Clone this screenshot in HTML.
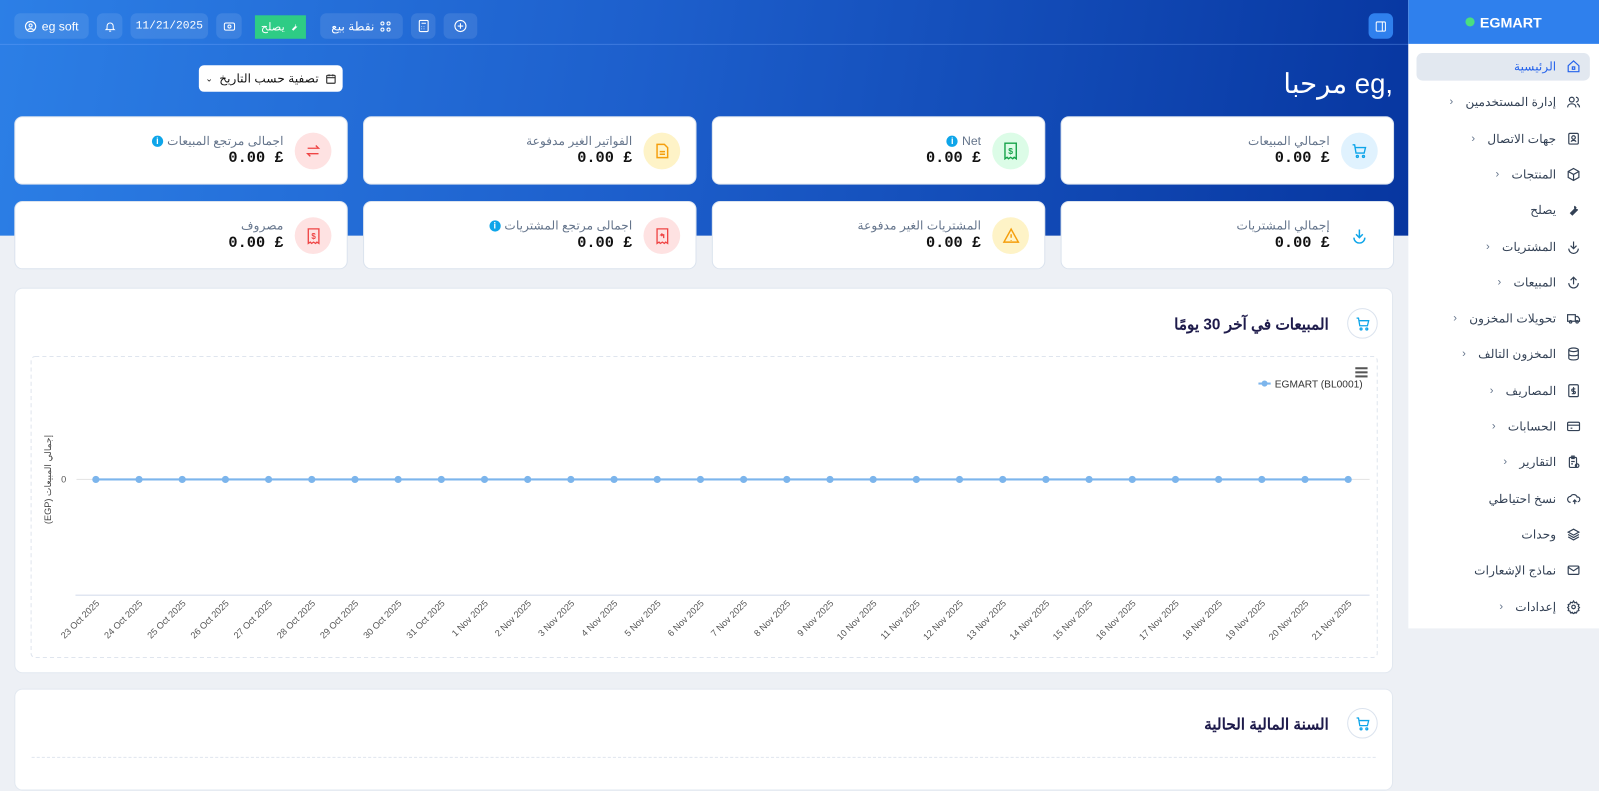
<!DOCTYPE html>
<html><head><meta charset="utf-8"><style>
*{box-sizing:border-box;margin:0;padding:0}
html,body{width:1599px;height:761px;overflow:hidden;background:#edf0f5}
#w{position:absolute;left:0;top:0;width:1568px;height:746px;transform:scale(1.0198,1.0201);transform-origin:0 0;font-family:"Liberation Sans","Noto Sans CJK SC",sans-serif;color:#1e293b}
.hdr{position:absolute;left:0;top:0;width:1381px;height:231px;background:linear-gradient(100deg,#2c7fe6 0%,#1d5fcc 45%,#0736a0 100%)}
.topline{position:absolute;left:0;top:43px;width:1381px;height:1px;background:rgba(120,170,255,.35)}
.tb{position:absolute;top:13px;height:25px;border-radius:6px;background:rgba(255,255,255,.1);color:#fff;font-size:12px;display:flex;align-items:center;justify-content:center;gap:5px}
.side{position:absolute;left:1381px;top:0;width:187px;height:616px;background:#fff}
.sh{height:43px;background:#2f80ed;color:#fff;font-weight:bold;font-size:14px;display:flex;align-items:center;justify-content:center;gap:5px}
.si{position:absolute;height:26px;display:flex;align-items:center;gap:10px;font-size:12px;color:#334155;direction:rtl}
.si svg{width:14px;height:14px}
.chev{color:#64748b;font-size:11px;margin-right:2px}
.card{position:absolute;width:327px;height:67px;background:#fff;border-radius:8px;border:1px solid #dbe3ee}
.ic{position:absolute;right:15px;top:15px;width:36px;height:36px;border-radius:50%;display:flex;align-items:center;justify-content:center}
.lb{position:absolute;right:62px;top:16px;font-size:12px;color:#64748b;direction:rtl;display:flex;gap:4px;align-items:center}
.vl{position:absolute;right:62px;top:32px;font-family:"Liberation Mono",monospace;font-weight:bold;font-size:15px;color:#111;direction:ltr}
.info{width:11px;height:11px;border-radius:50%;background:#0ea5e9;color:#fff;font-size:9px;font-weight:bold;display:inline-flex;align-items:center;justify-content:center}
.panel{position:absolute;left:14px;width:1352px;background:#fff;border-radius:8px;border:1px solid #e2e8f0}
.ptitle{position:absolute;right:62px;font-weight:bold;font-size:15px;color:#1e1b4b;direction:rtl}
.pic{position:absolute;right:14px;width:30px;height:30px;border-radius:50%;border:1px solid #dbe3ee;display:flex;align-items:center;justify-content:center}
</style></head><body><div id="w">
<div class="hdr"></div><div class="topline"></div>
<div class="tb" style="left:14px;width:73px"><svg width="12" height="12" viewBox="0 0 24 24" fill="none" stroke="#fff" stroke-width="2.2"><circle cx="12" cy="12" r="10"/><circle cx="12" cy="10" r="3"/><path d="M6.5 18.5c2-3 9-3 11 0"/></svg>eg soft</div>
<div class="tb" style="left:95px;width:25px"><svg width="12" height="12" viewBox="0 0 24 24" fill="none" stroke="#fff" stroke-width="2"><path d="M6 16V11a6 6 0 0 1 12 0v5l2 2H4z"/><path d="M10 21h4"/></svg></div>
<div class="tb" style="left:128px;width:76px;font-family:'Liberation Mono',monospace;font-size:11px">11/21/2025</div>
<div class="tb" style="left:212px;width:25px"><svg width="12" height="10" viewBox="0 0 24 18" fill="none" stroke="#fff" stroke-width="2"><rect x="2" y="2" width="20" height="14" rx="3"/><circle cx="12" cy="9" r="3"/></svg></div>
<div style="position:absolute;left:250px;top:15px;width:50px;height:23px;background:#2ecc85;color:#fff;font-size:11px;display:flex;align-items:center;justify-content:center;gap:4px;direction:rtl"><svg width="11" height="11" viewBox="0 0 24 24"><path d="M14 6a4 4 0 0 0 5 5l-9 9-3-3 9-9a4 4 0 0 0-2-2z" fill="#fff"/></svg><span>يصلح</span></div>
<div class="tb" style="left:314px;width:81px;direction:rtl;font-size:12px"><svg width="12" height="12" viewBox="0 0 24 24" fill="none" stroke="#fff" stroke-width="2"><circle cx="6" cy="6" r="3"/><circle cx="18" cy="6" r="3"/><circle cx="6" cy="18" r="3"/><circle cx="18" cy="18" r="3"/></svg>نقطة بيع</div>
<div class="tb" style="left:403px;width:24px"><svg width="11" height="13" viewBox="0 0 20 24" fill="none" stroke="#fff" stroke-width="2"><rect x="2" y="2" width="16" height="20" rx="2"/><path d="M6 7h8M6 13h1M10 13h1M6 17h1M10 17h1"/></svg></div>
<div class="tb" style="left:435px;width:33px"><svg width="13" height="13" viewBox="0 0 24 24" fill="none" stroke="#fff" stroke-width="2"><circle cx="12" cy="12" r="10"/><path d="M12 7v10M7 12h10"/></svg></div>
<div class="tb" style="left:1342px;width:24px;background:#2f80ed"><svg width="12" height="12" viewBox="0 0 24 24" fill="none" stroke="#fff" stroke-width="2"><rect x="3" y="3" width="18" height="18" rx="2"/><path d="M15 3v18"/></svg></div>
<div style="position:absolute;left:195px;top:64px;width:141px;height:26px;background:#fff;border-radius:5px;font-size:12px;color:#111;display:flex;align-items:center;justify-content:center;gap:6px;direction:rtl"><svg width="11" height="11" viewBox="0 0 24 24" fill="none" stroke="#333" stroke-width="2.5"><rect x="3" y="4" width="18" height="17" rx="2"/><path d="M3 9h18M8 2v4M16 2v4"/></svg>تصفية حسب التاريخ<span style="font-size:9px">⌄</span></div>
<div style="position:absolute;right:202px;top:67px;color:#fff;font-size:27px;direction:ltr">مرحبا eg,</div>

<div class="card" style="left:1040px;top:114px"><div class="ic" style="background:#e0f2fe"><svg width="16" height="16" viewBox="0 0 24 24" fill="none" stroke="#0ea5e9" stroke-width="2"><path d="M2 3h3l2 12h12l2-8H6"/><circle cx="9" cy="20" r="1.5"/><circle cx="18" cy="20" r="1.5"/></svg></div><div class="lb">اجمالي المبيعات</div><div class="vl">0.00 £</div></div>
<div class="card" style="left:698px;top:114px"><div class="ic" style="background:#dcfce7"><svg width="14" height="18" viewBox="0 0 20 26" fill="none" stroke="#16a34a" stroke-width="2"><path d="M2 2h16v22l-3-2-2 2-3-2-3 2-2-2-3 2z"/><text x="10" y="17" font-size="12" fill="#16a34a" stroke="none" text-anchor="middle" font-weight="bold">$</text></svg></div><div class="lb">Net <span class="info">i</span></div><div class="vl">0.00 £</div></div>
<div class="card" style="left:356px;top:114px"><div class="ic" style="background:#fef3c7"><svg width="13" height="16" viewBox="0 0 20 24" fill="none" stroke="#f59e0b" stroke-width="2.2"><path d="M2 2h11l5 5v15H2z"/><path d="M6 13h8M6 17h8"/></svg></div><div class="lb">الفواتير الغير مدفوعة</div><div class="vl">0.00 £</div></div>
<div class="card" style="left:14px;top:114px"><div class="ic" style="background:#fee2e2"><svg width="16" height="16" viewBox="0 0 24 24" fill="none" stroke="#ef4444" stroke-width="2"><path d="M4 8h16l-4-4M20 16H4l4 4"/></svg></div><div class="lb">اجمالى مرتجع المبيعات <span class="info">i</span></div><div class="vl">0.00 £</div></div>
<div class="card" style="left:1040px;top:197px"><div class="ic"><svg width="16" height="16" viewBox="0 0 24 24" fill="none" stroke="#0ea5e9" stroke-width="2.2"><path d="M12 3v12M7 10l5 5 5-5"/><path d="M4 15a8 8 0 0 0 16 0"/></svg></div><div class="lb">إجمالي المشتريات</div><div class="vl">0.00 £</div></div>
<div class="card" style="left:698px;top:197px"><div class="ic" style="background:#fef3c7"><svg width="17" height="16" viewBox="0 0 24 22" fill="none" stroke="#f59e0b" stroke-width="2"><path d="M12 2L2 20h20z"/><path d="M12 9v5M12 17v1"/></svg></div><div class="lb">المشتريات الغير مدفوعة</div><div class="vl">0.00 £</div></div>
<div class="card" style="left:356px;top:197px"><div class="ic" style="background:#fee2e2"><svg width="13" height="17" viewBox="0 0 20 26" fill="none" stroke="#ef4444" stroke-width="2"><path d="M2 2h16v22l-3-2-2 2-3-2-3 2-2-2-3 2z"/><path d="M12 16v-5H8l2-2M8 11l2 2"/></svg></div><div class="lb">اجمالى مرتجع المشتريات <span class="info">i</span></div><div class="vl">0.00 £</div></div>
<div class="card" style="left:14px;top:197px"><div class="ic" style="background:#fee2e2"><svg width="13" height="17" viewBox="0 0 20 26" fill="none" stroke="#ef4444" stroke-width="2"><path d="M2 2h16v22l-3-2-2 2-3-2-3 2-2-2-3 2z"/><text x="10" y="17" font-size="12" fill="#ef4444" stroke="none" text-anchor="middle" font-weight="bold">$</text></svg></div><div class="lb">مصروف</div><div class="vl">0.00 £</div></div>

<div class="panel" style="top:282px;height:378px">
<div class="pic" style="top:19px"><svg width="15" height="15" viewBox="0 0 24 24" fill="none" stroke="#0ea5e9" stroke-width="2"><path d="M2 3h3l2 12h12l2-8H6"/><circle cx="9" cy="20" r="1.5"/><circle cx="18" cy="20" r="1.5"/></svg></div>
<div class="ptitle" style="top:26px">المبيعات في آخر 30 يومًا</div>
</div>
<svg style="position:absolute;left:0;top:0" width="1381" height="746">
<rect x="30.5" y="349.5" width="1320" height="295" rx="4" fill="none" stroke="#dfe5ee" stroke-dasharray="4 3"/>
<g fill="#555"><rect x="1329" y="360" width="12" height="2"/><rect x="1329" y="364" width="12" height="2"/><rect x="1329" y="368" width="12" height="2"/></g>
<line x1="1234" y1="376" x2="1246" y2="376" stroke="#7cb5ec" stroke-width="2"/><circle cx="1240" cy="376" r="3" fill="#7cb5ec"/>
<text x="1250" y="380" font-size="10" fill="#333" font-family="Liberation Sans">EGMART (BL0001)</text>
<text x="60" y="473" font-size="9" fill="#555" font-family="Liberation Sans">0</text>
<text transform="translate(50,470) rotate(-90)" font-size="9" fill="#444" text-anchor="middle" direction="ltr" font-family="Liberation Sans,Noto Sans CJK SC,sans-serif">(EGP) إجمالي المبيعات</text>
<line x1="75" y1="470" x2="1343" y2="470" stroke="#e6e6e6"/>
<line x1="74" y1="583.5" x2="1343" y2="583.5" stroke="#e0e6f1" stroke-width="1.5"/>
<line x1="94" y1="470" x2="1322" y2="470" stroke="#7cb5ec" stroke-width="2"/>
<g id="pts" fill="#7cb5ec"></g>
<g id="lbls" font-size="9" fill="#555" font-family="Liberation Sans"></g>
</svg>
<script>
var d=[];for(var i=23;i<=31;i++)d.push(i+" Oct 2025");for(var i=1;i<=21;i++)d.push(i+" Nov 2025");
var p="",l="";for(var i=0;i<30;i++){var x=94+i*42.345;p+='<circle cx="'+x+'" cy="470" r="3.5"/>';l+='<text text-anchor="end" transform="translate('+(x+4)+',592) rotate(-45)">'+d[i]+'</text>';}
document.getElementById('pts').innerHTML=p;document.getElementById('lbls').innerHTML=l;
</script>
<div class="panel" style="top:675px;height:100px">
<div class="pic" style="top:18px"><svg width="15" height="15" viewBox="0 0 24 24" fill="none" stroke="#0ea5e9" stroke-width="2"><path d="M2 3h3l2 12h12l2-8H6"/><circle cx="9" cy="20" r="1.5"/><circle cx="18" cy="20" r="1.5"/></svg></div>
<div class="ptitle" style="top:25px">السنة المالية الحالية</div>
<div style="position:absolute;left:16px;right:16px;top:66px;border-top:1px dashed #dfe5ee"></div>
</div>

<div class="side">
<div class="sh"><span style="width:9px;height:9px;border-radius:50%;background:#4ade80;display:inline-block"></span>EGMART</div>
<div style="position:absolute;left:8px;top:52px;width:170px;height:27px;background:#e2e8f0;border-radius:6px"></div>
</div>
<div id="menu"></div>
<script>
var items=[["الرئيسية",0,'<path d="M3 11l9-8 9 8v10H3z"/><rect x="10" y="13" width="4" height="4"/>',1],
["إدارة المستخدمين",1,'<circle cx="9" cy="8" r="4"/><path d="M2 21c0-4 3-6 7-6s7 2 7 6M16 4a4 4 0 0 1 0 8M22 21c0-3-2-5-4-6"/>'],
["جهات الاتصال",1,'<rect x="4" y="3" width="16" height="18" rx="2"/><circle cx="12" cy="10" r="3"/><path d="M8 17c1-3 7-3 8 0"/>'],
["المنتجات",1,'<path d="M12 2l9 5v10l-9 5-9-5V7z"/><path d="M3 7l9 5 9-5M12 12v10"/>'],
["يصلح",0,'<path d="M14 6a4 4 0 0 0 5 5l-9 9-3-3 9-9a4 4 0 0 0-2-2z" fill="#334155"/>'],
["المشتريات",1,'<path d="M12 3v12M7 10l5 5 5-5"/><path d="M4 15a8 8 0 0 0 16 0"/>'],
["المبيعات",1,'<path d="M12 15V3M7 8l5-5 5 5"/><path d="M4 13a8 8 0 0 0 16 0"/>'],
["تحويلات المخزون",1,'<rect x="2" y="6" width="13" height="11"/><path d="M15 9h4l3 4v4h-7"/><circle cx="7" cy="18" r="2"/><circle cx="18" cy="18" r="2"/>'],
["المخزون التالف",1,'<ellipse cx="12" cy="5" rx="8" ry="3"/><path d="M4 5v14c0 2 4 3 8 3s8-1 8-3V5M4 12c0 2 4 3 8 3s8-1 8-3"/>'],
["المصاريف",1,'<rect x="4" y="2" width="16" height="20" rx="2"/><path d="M12 6v12M15 9h-4a2 2 0 0 0 0 4h2a2 2 0 0 1 0 4H9"/>'],
["الحسابات",1,'<rect x="2" y="5" width="20" height="14" rx="2"/><path d="M2 10h20M7 15h3"/>'],
["التقارير",1,'<rect x="5" y="4" width="12" height="17" rx="2"/><path d="M9 2h4v4H9zM8 11h6M8 15h3"/><circle cx="18" cy="18" r="3"/>'],
["نسخ احتياطي",0,'<path d="M7 18a5 5 0 0 1 0-10 6 6 0 0 1 11 1 4 4 0 0 1 1 8M14 14v7M11 17l3-3 3 3"/>'],
["وحدات",0,'<path d="M12 3l9 5-9 5-9-5z"/><path d="M3 12l9 5 9-5M3 16l9 5 9-5"/>'],
["نماذج الإشعارات",0,'<rect x="3" y="5" width="18" height="14" rx="2"/><path d="M3 7l9 6 9-6"/>'],
["إعدادات",1,'<circle cx="12" cy="12" r="3"/><path d="M12 2l2 3 3-1 1 3 3 1-1 3 2 2-2 2 1 3-3 1-1 3-3-1-2 3-2-3-3 1-1-3-3-1 1-3-2-2 2-2-1-3 3-1 1-3 3 1z"/>']];
var h="";items.forEach(function(it,i){var y=52+i*35.3;var c=it[3]?'#2563eb':'#334155';
h+='<div class="si" style="top:'+y+'px;right:18px;color:'+c+'"><svg viewBox="0 0 24 24" fill="none" stroke="'+c+'" stroke-width="2">'+it[2]+'</svg><span>'+it[0]+'</span>'+(it[1]?'<span class="chev">&lsaquo;</span>':'')+'</div>';});
document.getElementById('menu').innerHTML=h;
</script>
</div></body></html>
